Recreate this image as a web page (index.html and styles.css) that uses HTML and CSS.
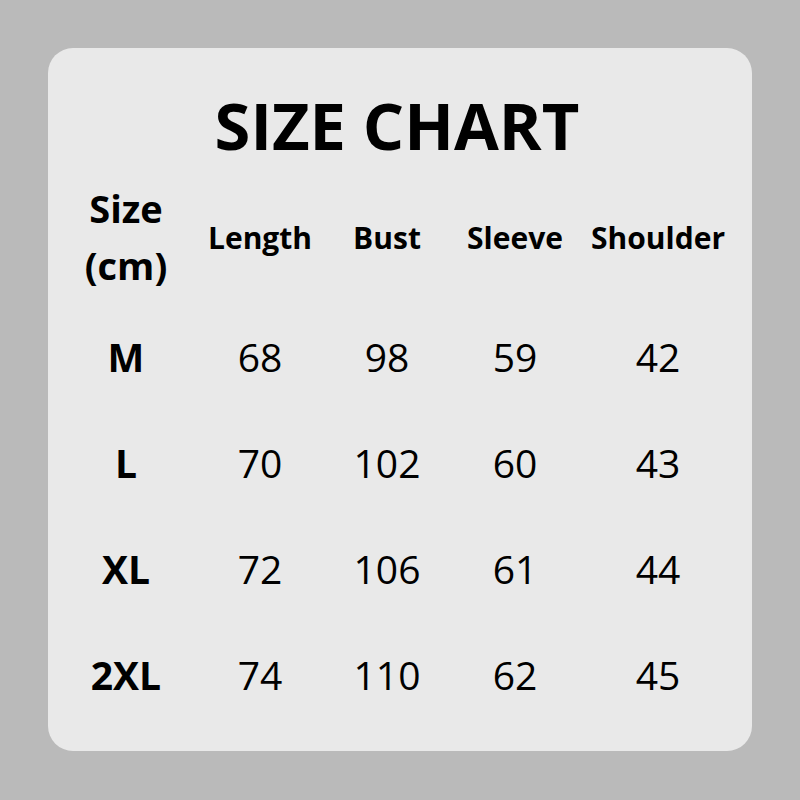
FILE: index.html
```html
<!DOCTYPE html>
<html>
<head>
<meta charset="utf-8">
<link rel="stylesheet" href="styles.css">
</head>
<body>
<div class="card">
  <h1 class="title">SIZE CHART</h1>
  <div class="grid">
    <div class="head first">Size<br>(cm)</div>
    <div class="head">Length</div>
    <div class="head">Bust</div>
    <div class="head">Sleeve</div>
    <div class="head">Shoulder</div>

    <div class="cell label">M</div><div class="cell">68</div><div class="cell">98</div><div class="cell">59</div><div class="cell">42</div>
    <div class="cell label">L</div><div class="cell">70</div><div class="cell">102</div><div class="cell">60</div><div class="cell">43</div>
    <div class="cell label">XL</div><div class="cell">72</div><div class="cell">106</div><div class="cell">61</div><div class="cell">44</div>
    <div class="cell label">2XL</div><div class="cell">74</div><div class="cell">110</div><div class="cell">62</div><div class="cell">45</div>
  </div>
</div>
</body>
</html>
```
FILE: styles.css
```css
html, body {
  margin: 0;
  padding: 0;
}
body {
  width: 800px;
  height: 800px;
  background: #bababa;
  padding: 48px;
  box-sizing: border-box;
  font-family: "Open Sans", "Noto Sans", sans-serif;
  color: #000;
}
.card {
  width: 704px;
  height: 703px;
  background: #e9e9e9;
  border-radius: 25px;
  box-sizing: border-box;
  padding: 37px 19px 0 11px;
}
.title {
  margin: 0;
  height: 80px;
  line-height: 80px;
  font-size: 65px;
  font-weight: 700;
  text-align: center;
  padding-left: 2px;
}
.grid {
  margin-top: 6px;
  display: grid;
  grid-template-columns: 134px 134px 120px 136px 150px;
  grid-template-rows: 132px repeat(4, 106px);
}
.head {
  display: flex;
  align-items: center;
  justify-content: center;
  text-align: center;
  font-weight: 700;
  font-size: 30px;
}
.head.first {
  font-size: 38px;
  line-height: 57px;
}
.cell {
  display: flex;
  align-items: center;
  justify-content: center;
  font-size: 39px;
}
.cell.label {
  font-weight: 700;
}
```
